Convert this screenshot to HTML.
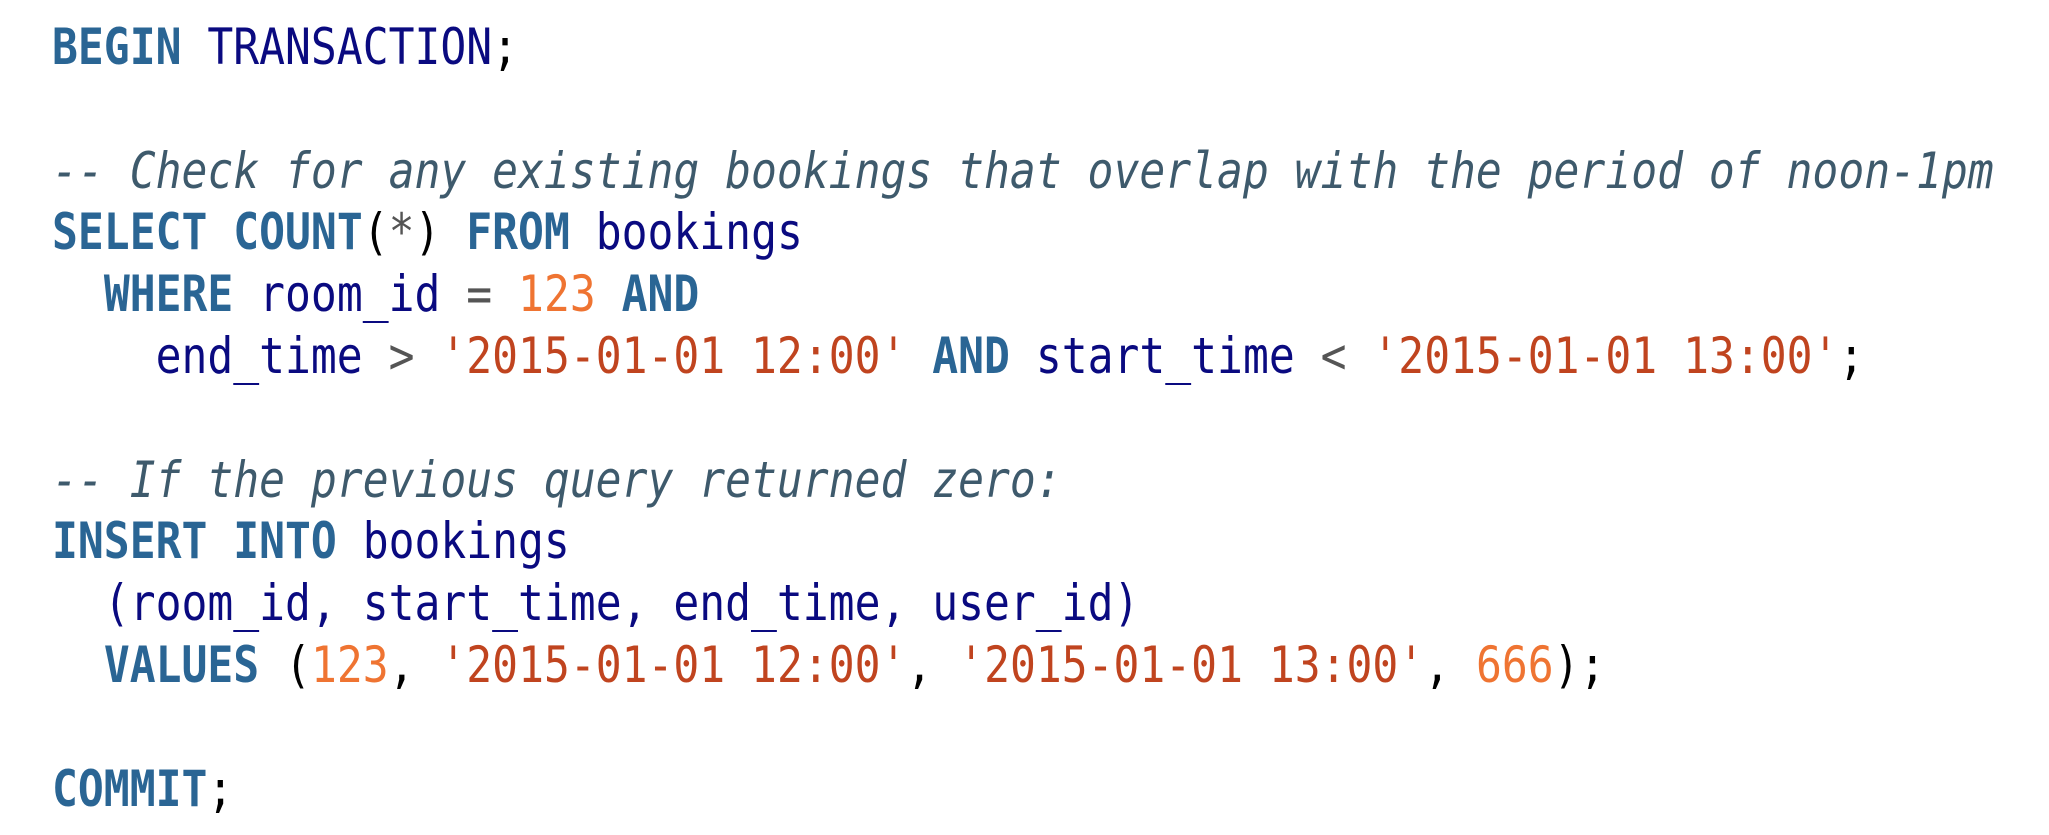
<!DOCTYPE html>
<html><head><meta charset="utf-8"><style>
html,body{margin:0;padding:0;background:#fff;width:2049px;height:835px;overflow:hidden}
pre{margin:0;padding:17px 0 0 60.5px;font-family:"DejaVu Sans Mono","Liberation Mono",monospace;font-size:50px;line-height:61.8px;color:#000;transform:scaleX(0.86);transform-origin:0 0;width:2600px}
.k{color:#2a6594;font-weight:bold}
.n{color:#0a0a80}
.c{color:#3e5a6c;font-style:italic}
.s{color:#c0441f}
.m{color:#ef7432}
.o{color:#555}
</style></head><body>
<pre><span class="k">BEGIN</span> <span class="n">TRANSACTION</span>;

<span class="c">-- Check for any existing bookings that overlap with the period of noon-1pm</span>
<span class="k">SELECT</span> <span class="k">COUNT</span>(<span class="o">*</span>) <span class="k">FROM</span> <span class="n">bookings</span>
  <span class="k">WHERE</span> <span class="n">room_id</span> <span class="o">=</span> <span class="m">123</span> <span class="k">AND</span>
    <span class="n">end_time</span> <span class="o">&gt;</span> <span class="s">'2015-01-01 12:00'</span> <span class="k">AND</span> <span class="n">start_time</span> <span class="o">&lt;</span> <span class="s">'2015-01-01 13:00'</span>;

<span class="c">-- If the previous query returned zero:</span>
<span class="k">INSERT</span> <span class="k">INTO</span> <span class="n">bookings</span>
  <span class="n">(room_id, start_time, end_time, user_id)</span>
  <span class="k">VALUES</span> (<span class="m">123</span>, <span class="s">'2015-01-01 12:00'</span>, <span class="s">'2015-01-01 13:00'</span>, <span class="m">666</span>);

<span class="k">COMMIT</span>;</pre>
</body></html>
